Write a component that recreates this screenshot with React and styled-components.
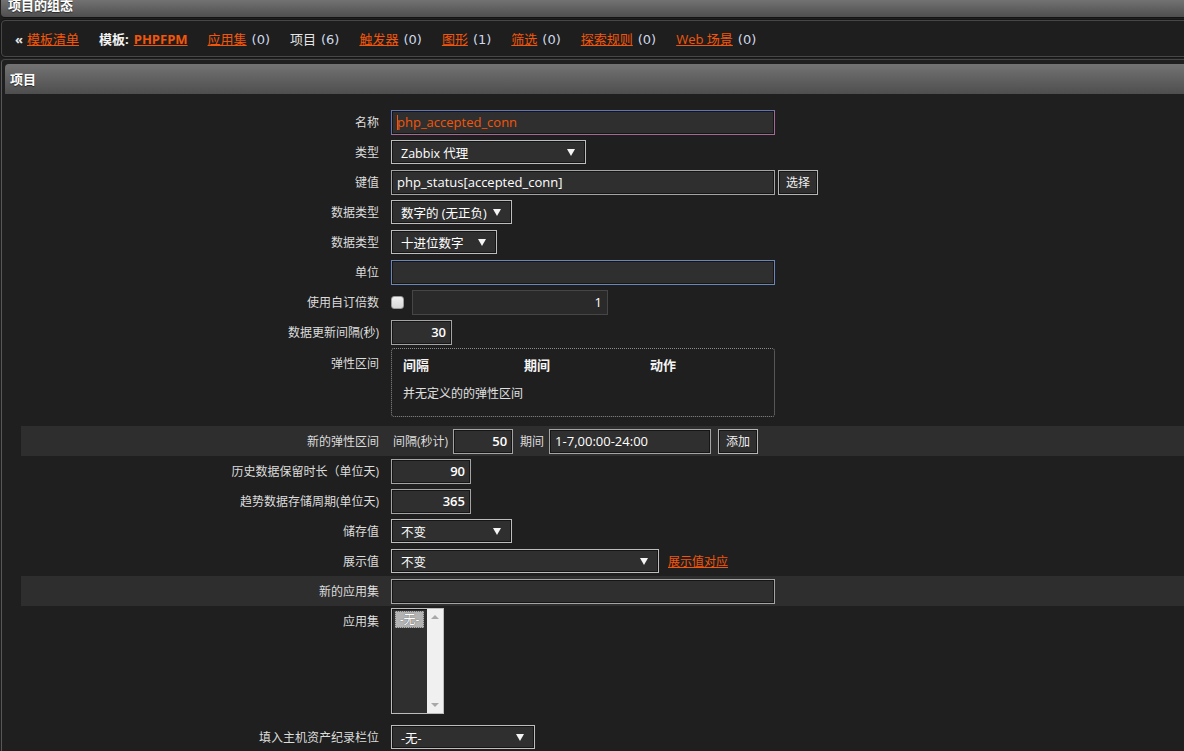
import React from "react";
import styled, { createGlobalStyle } from "styled-components";

const Global = createGlobalStyle`
  html, body { margin: 0; padding: 0; background: #1f1f1f; overflow: hidden; }
  body { font-family: "Open Sans", "Noto Sans CJK SC", sans-serif; color: #e2e2e2; }
  * { box-sizing: border-box; }
`;

const Page = styled.div`
  width: 1184px;
  height: 751px;
  overflow: hidden;
  background: #1f1f1f;
`;

const TopBar = styled.div`
  height: 17px;
  margin-left: 1px;
  width: 1200px;
  background: linear-gradient(#727272, #4f4f4f);
  border-radius: 0 0 0 4px;
  overflow: hidden;
  box-shadow: 0 1px 0 #141414;
`;

const TopTitle = styled.div`
  font-weight: bold;
  font-size: 13px;
  line-height: 13px;
  margin-top: -1px;
  padding-left: 7px;
  color: #fff;
  text-shadow: 0 1px 1px #2a2a2a;
`;

const NavBox = styled.div`
  margin: 3px 0 0 1px;
  width: 1200px;
  height: 37px;
  border: 1px solid #474747;
  border-radius: 4px;
  background: #1e1e1e;
  box-shadow: 0 0 0 1px #161616;
  display: flex;
  align-items: center;
  padding-left: 13px;
  gap: 20px;
  font-size: 13px;
`;

const NavGroup = styled.span`
  display: inline-flex;
  align-items: baseline;
  gap: ${(p) => p.$gap || 5}px;
  color: ${(p) => (p.$bold ? "#f2f2f2" : "#e6e6e6")};
  font-weight: ${(p) => (p.$bold ? "bold" : "normal")};
`;

const Count = styled.span`
  font-family: "DejaVu Sans", "Noto Sans CJK SC", sans-serif;
  color: #cfd9ea;
`;

const Link = styled.a`
  color: #f2560a;
  text-decoration: underline;
  font-weight: ${(p) => (p.$bold ? "bold" : "normal")};
  font-size: ${(p) => p.$size || 13}px;
  cursor: pointer;
`;

const Panel = styled.div`
  margin: 2px 0 0 1px;
  width: 1200px;
  border-left: 1px solid #575757;
  border-top: 1px solid #464646;
  border-radius: 4px 0 0 0;
  padding: 4px 0 0 3px;
  height: 700px;
`;

const PanelHeader = styled.div`
  height: 30px;
  line-height: 30px;
  background: linear-gradient(#737373, #4e4e4e);
  border-radius: 4px 0 0 0;
  padding-left: 5px;
  font-weight: bold;
  font-size: 13px;
  color: #fff;
  text-shadow: 0 1px 1px #2a2a2a;
`;

const Form = styled.div`
  padding-top: 13px;
  margin-left: 16px;
`;

const Row = styled.div`
  display: grid;
  grid-template-columns: 358px 1fr;
  column-gap: 12px;
  height: ${(p) => p.$h || 30}px;
  align-items: ${(p) => (p.$top ? "start" : "center")};
  background: ${(p) => (p.$band ? "#2e2e2e" : "transparent")};
`;

const Label = styled.div`
  text-align: right;
  font-size: 12px;
  color: #dcdcdc;
  white-space: nowrap;
  padding-top: ${(p) => p.$pt || 0}px;
`;

const Field = styled.div`
  display: flex;
  align-items: center;
  gap: ${(p) => p.$gap || 8}px;
`;

const TextBox = styled.div`
  width: ${(p) => p.$w}px;
  height: 25px;
  background: ${(p) => (p.$disabled ? "#2a2a2a" : "#2f2f2f")};
  border: 1px solid ${(p) => (p.$disabled ? "#464646" : "#a4a4a4")};
  border-color: ${(p) => p.$bc || ""};
  box-shadow: ${(p) => (p.$disabled ? "none" : "inset 0 0 0 1px #151515")};
  color: ${(p) => p.$color || "#fff"};
  font-size: 13px;
  line-height: 23px;
  padding: 0 5px;
  text-align: ${(p) => (p.$right ? "right" : "left")};
  font-weight: ${(p) => (p.$bold ? 600 : "normal")};
  white-space: nowrap;
  overflow: hidden;
`;

const Caret = styled.span`
  display: inline-block;
  width: 1px;
  height: 15px;
  background: #f2560a;
  vertical-align: -3px;
  margin-right: -1px;
`;

const Select = styled.div`
  width: ${(p) => p.$w}px;
  height: 24px;
  background: #2f2f2f;
  border: 1px solid #bdbdbd;
  box-shadow: inset 0 0 0 1px #151515;
  display: flex;
  align-items: center;
  justify-content: space-between;
  padding: 0 10px 0 9px;
  color: #fff;
  font-size: 12.5px;
  white-space: nowrap;
`;

const Arrow = styled.span`
  width: 0;
  height: 0;
  border-left: 4px solid transparent;
  border-right: 4px solid transparent;
  border-top: 7px solid #f4f4f4;
  flex: none;
`;

const Button = styled.div`
  width: 40px;
  height: 25px;
  margin-left: ${(p) => p.$ml || 0}px;
  background: #2f2f2f;
  border: 1px solid #b4b4b4;
  box-shadow: inset 0 0 0 1px #151515;
  display: flex;
  align-items: center;
  justify-content: center;
  font-size: 12px;
  color: #f0f0f0;
`;

const Check = styled.div`
  width: 13px;
  height: 13px;
  border-radius: 3px;
  background: linear-gradient(#f0f0f0, #d8d8d8);
  border: 1px solid #9a9a9a;
`;

const Inline = styled.span`
  font-size: 12px;
  color: #dcdcdc;
  white-space: nowrap;
  margin-left: ${(p) => p.$ml || 0}px;
`;

const IntervalBox = styled.div`
  margin-top: 1px;
  width: 384px;
  height: 69px;
  border: 1px dotted #8c8c8c;
  border-radius: 3px;
  padding: 6px 11px 0;
`;

const IntervalHead = styled.div`
  display: grid;
  grid-template-columns: 121px 126px 1fr;
  font-weight: bold;
  font-size: 13px;
  color: #f4f4f4;
  height: 20px;
  line-height: 20px;
`;

const IntervalEmpty = styled.div`
  margin-top: 9px;
  font-size: 12px;
  color: #e0e0e0;
`;

const ListBox = styled.div`
  margin-top: 2px;
  width: 53px;
  height: 106px;
  border: 1px solid #bdbdbd;
  display: flex;
  background: #2f2f2f;
`;

const ListItems = styled.div`
  flex: 1;
  padding: 2px 3px;
  box-shadow: inset 1px 1px 0 #151515;
`;

const ListOption = styled.div`
  height: 17px;
  background: #b3b3b3;
  border: 1px dotted #6a6a6a;
  color: #fff;
  font-size: 12px;
  line-height: 15px;
  text-align: center;
  text-shadow: 0 0 1px #333;
`;

const Scroll = styled.div`
  width: 16px;
  background: #f0f0f0;
  display: flex;
  flex-direction: column;
  justify-content: space-between;
  align-items: center;
  padding: 6px 0 6px;
`;

const Tri = styled.div`
  width: 0;
  height: 0;
  border-left: 4px solid transparent;
  border-right: 4px solid transparent;
  ${(p) => (p.$down ? "border-top: 4px solid #a8a8a8;" : "border-bottom: 4px solid #a8a8a8;")}
`;

export default function App() {
  return (
    <Page>
      <Global />
      <TopBar>
        <TopTitle>项目的组态</TopTitle>
      </TopBar>
      <NavBox>
        <NavGroup $gap={4}>
          <span style={{ fontWeight: "bold" }}>«</span>
          <Link>模板清单</Link>
        </NavGroup>
        <NavGroup $bold $gap={5}>
          <span>模板:</span>
          <Link $bold>PHPFPM</Link>
        </NavGroup>
        <NavGroup>
          <Link>应用集</Link>
          <Count>(0)</Count>
        </NavGroup>
        <NavGroup>
          <span>项目</span>
          <Count>(6)</Count>
        </NavGroup>
        <NavGroup>
          <Link>触发器</Link>
          <Count>(0)</Count>
        </NavGroup>
        <NavGroup>
          <Link>图形</Link>
          <Count>(1)</Count>
        </NavGroup>
        <NavGroup>
          <Link>筛选</Link>
          <Count>(0)</Count>
        </NavGroup>
        <NavGroup>
          <Link>探索规则</Link>
          <Count>(0)</Count>
        </NavGroup>
        <NavGroup>
          <Link>Web 场景</Link>
          <Count>(0)</Count>
        </NavGroup>
      </NavBox>

      <Panel>
        <PanelHeader>项目</PanelHeader>
        <Form>
          <Row>
            <Label>名称</Label>
            <Field>
              <TextBox $w={384} $color="#f2560a" $bc="#6374b4 #a46a94 #a46a94 #6374b4">
                <Caret />
                php_accepted_conn
              </TextBox>
            </Field>
          </Row>
          <Row>
            <Label>类型</Label>
            <Field>
              <Select $w={195}>
                <span>Zabbix 代理</span>
                <Arrow />
              </Select>
            </Field>
          </Row>
          <Row>
            <Label>键值</Label>
            <Field $gap={3}>
              <TextBox $w={384}>php_status[accepted_conn]</TextBox>
              <Button>选择</Button>
            </Field>
          </Row>
          <Row>
            <Label>数据类型</Label>
            <Field>
              <Select $w={121}>
                <span>数字的 (无正负)</span>
                <Arrow />
              </Select>
            </Field>
          </Row>
          <Row>
            <Label>数据类型</Label>
            <Field>
              <Select $w={106}>
                <span>十进位数字</span>
                <Arrow />
              </Select>
            </Field>
          </Row>
          <Row>
            <Label>单位</Label>
            <Field>
              <TextBox $w={384} $bc="#6a86bb" />
            </Field>
          </Row>
          <Row>
            <Label>使用自订倍数</Label>
            <Field $gap={8}>
              <Check />
              <TextBox $w={196} $disabled $right>1</TextBox>
            </Field>
          </Row>
          <Row>
            <Label>数据更新间隔(秒)</Label>
            <Field>
              <TextBox $w={61} $right $bold>30</TextBox>
            </Field>
          </Row>
          <Row $h={79} $top>
            <Label $pt={7}>弹性区间</Label>
            <Field>
              <IntervalBox>
                <IntervalHead>
                  <span>间隔</span>
                  <span>期间</span>
                  <span>动作</span>
                </IntervalHead>
                <IntervalEmpty>并无定义的的弹性区间</IntervalEmpty>
              </IntervalBox>
            </Field>
          </Row>
          <Row $band>
            <Label>新的弹性区间</Label>
            <Field $gap={5}>
              <Inline $ml={2}>间隔(秒计)</Inline>
              <TextBox $w={60} $right $bold>50</TextBox>
              <Inline $ml={2}>期间</Inline>
              <TextBox $w={162}>1-7,00:00-24:00</TextBox>
              <Button $ml={2}>添加</Button>
            </Field>
          </Row>
          <Row>
            <Label>历史数据保留时长（单位天)</Label>
            <Field>
              <TextBox $w={80} $right $bold>90</TextBox>
            </Field>
          </Row>
          <Row>
            <Label>趋势数据存储周期(单位天)</Label>
            <Field>
              <TextBox $w={80} $right $bold>365</TextBox>
            </Field>
          </Row>
          <Row>
            <Label>储存值</Label>
            <Field>
              <Select $w={121}>
                <span>不变</span>
                <Arrow />
              </Select>
            </Field>
          </Row>
          <Row>
            <Label>展示值</Label>
            <Field $gap={9}>
              <Select $w={268}>
                <span>不变</span>
                <Arrow />
              </Select>
              <Link $size={12}>展示值对应</Link>
            </Field>
          </Row>
          <Row $band>
            <Label>新的应用集</Label>
            <Field>
              <TextBox $w={384} />
            </Field>
          </Row>
          <Row $h={116} $top>
            <Label $pt={6}>应用集</Label>
            <Field>
              <ListBox>
                <ListItems>
                  <ListOption>-无-</ListOption>
                </ListItems>
                <Scroll>
                  <Tri />
                  <Tri $down />
                </Scroll>
              </ListBox>
            </Field>
          </Row>
          <Row>
            <Label>填入主机资产纪录栏位</Label>
            <Field>
              <Select $w={144}>
                <span>-无-</span>
                <Arrow />
              </Select>
            </Field>
          </Row>
        </Form>
      </Panel>
    </Page>
  );
}
